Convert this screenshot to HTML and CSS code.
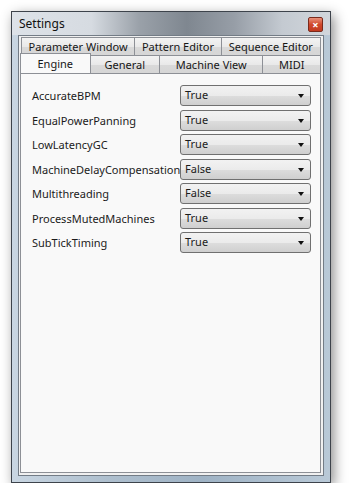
FILE: index.html
```html
<!DOCTYPE html>
<html lang="en">

<head>
    <meta charset="UTF-8">
    <title>Settings</title>
    <link rel="stylesheet" href="styles.css">
</head>

<body>
    <div class="window">
        <div class="titlebar">
            <span class="title">Settings</span>
            <span class="btn-close">&times;</span>
        </div>
        <div class="client">
            <div class="tabs">
                <div class="tab-row">
                    <span class="tab w-param">Parameter Window</span>
                    <span class="tab w-pattern">Pattern Editor</span>
                    <span class="tab w-seq">Sequence Editor</span>
                </div>
                <div class="tab-row front">
                    <span class="tab w-engine active">Engine</span>
                    <span class="tab w-general">General</span>
                    <span class="tab w-mview">Machine View</span>
                    <span class="tab w-midi">MIDI</span>
                </div>
            </div>
            <div class="panel">
                <ul class="props">
                    <li><span class="name">AccurateBPM</span><span class="combo">True</span></li>
                    <li><span class="name">EqualPowerPanning</span><span class="combo">True</span></li>
                    <li><span class="name">LowLatencyGC</span><span class="combo">True</span></li>
                    <li><span class="name">MachineDelayCompensation</span><span class="combo">False</span></li>
                    <li><span class="name">Multithreading</span><span class="combo">False</span></li>
                    <li><span class="name">ProcessMutedMachines</span><span class="combo">True</span></li>
                    <li><span class="name">SubTickTiming</span><span class="combo">True</span></li>
                </ul>
            </div>
        </div>
    </div>
</body>

</html>
```

FILE: styles.css
```css
body{margin:0;padding:11px 0 0 11px;background:#fff;font-family:"Noto Sans","Open Sans",sans-serif;font-size:11px;color:#1b1b1b;}
ul{list-style:none;margin:0;padding:0;}

.window {
    display: flex;
    flex-direction: column;
    width: 318px;
    height: 470px;
    border: 1px solid #3d434b;
    background: linear-gradient(90deg, #c9d6e2, #aebfce 30%, #9fb3c5 60%, #b9c9d7);
    box-shadow: 3px 4px 12px rgba(0,0,0,.45);
}

.titlebar {
    display: flex;
    align-items: center;
    justify-content: space-between;
    height: 23px;
    padding: 0 7px 0 7px;
    background: linear-gradient(90deg, #dde2e8 0, #d6dbe1 25%, #9aa1a9 40%, #7f8790 55%, #979ea7 70%, #c4cad1 85%, #d1d6dc 100%);
    font-size: 12px;
}
.titlebar .title{color:#111;}
.titlebar .btn-close{
    display:flex;align-items:center;justify-content:center;
    width:13px;height:13px;margin-top:1px;
    border:1px solid #7a2a1c;border-radius:2px;
    background:linear-gradient(#e9907a,#d0482c 50%,#c23a20);
    color:#fff;font-size:11px;line-height:1;font-weight:bold;
}

.client {
    flex: 1;
    display: flex;
    flex-direction: column;
    margin: 0 6px 6px 6px;
    padding: 1px 2px 2px 1px;
    border: 1px solid #737c86;
    background: #f0f0f0;
}

.tab-row{display:flex;height:18px;}
.tab-row:first-child{padding-left:1px;}
.tab {
    display: flex;
    align-items: center;
    justify-content: center;
    box-sizing: border-box;
    height: 18px;
    border: 1px solid #8d9096;
    border-bottom: none;
    border-left-width: 0;
    background: linear-gradient(#f3f3f3, #e9e9e9 50%, #d9d9d9 51%, #d6d6d6);
    color: #161616;
}
.tab-row .tab:first-child{border-left-width:1px;}
.tab.active{height:20px;margin-top:-2px;background:#f9f9f9;position:relative;z-index:1;border-left-width:1px;}
.w-param{width:115px;}
.w-pattern{width:87px;}
.w-seq{width:100px;}
.w-engine{width:71px;}
.w-general{width:70px;}
.w-mview{width:104px;}
.w-midi{width:58px;}

.panel {
    flex: 1;
    border: 1px solid #8d9096;
    background: #f9f9f9;
    padding: 11px 0 0 11px;
}

.props{display:flex;flex-direction:column;gap:3.5px;}
.props li{display:flex;align-items:center;height:21px;}
.props .name{width:148px;white-space:nowrap;}
.combo {
    position: relative;
    box-sizing: border-box;
    width: 131px;
    height: 21px;
    padding: 0 0 0 4px;
    border: 1px solid #707070;
    border-radius: 3px;
    background: linear-gradient(#f2f2f2, #ebebeb 50%, #dddddd 51%, #cfcfcf);
    line-height: 18px;
}
.combo::after {
    content: "";
    position: absolute;
    right: 6px;
    top: 8px;
    border-left: 3.5px solid transparent;
    border-right: 3.5px solid transparent;
    border-top: 4px solid #111;
}
```
